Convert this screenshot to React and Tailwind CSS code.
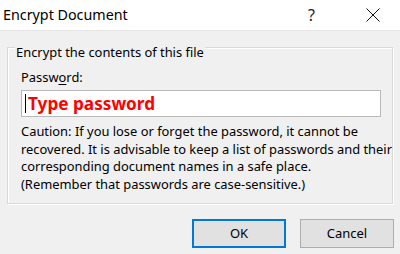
import React from 'react';

const font = { fontFamily: '"Noto Sans", "Open Sans", sans-serif' };

export default function App() {
  return (
    <div
      className="w-[400px] h-[254px] bg-[#f0f0f0] overflow-hidden flex flex-col text-black"
      style={font}
    >
      {/* title bar */}
      <div className="h-[31px] bg-white border-b border-[#e6e6e6] flex items-center shrink-0">
        <div className="pl-[3px] text-[14.3px] leading-none flex-1">Encrypt Document</div>
        <div className="w-[14px] text-[16px] leading-none text-[#222] mr-[44px]">?</div>
        <svg width="14" height="14" viewBox="0 0 14 14" className="mr-[20px]">
          <path d="M0.5 0.5 L13.5 13.5 M13.5 0.5 L0.5 13.5" stroke="#111" strokeWidth="1" fill="none" />
        </svg>
      </div>

      {/* group box */}
      <div className="mx-[7px] mt-[16px] h-[157px] border border-[#d9d9d9] shadow-[inset_1px_1px_0_#fff,1px_1px_0_#fff] shrink-0">
        <div className="-mt-[5px] ml-[7px] w-fit px-[1px] bg-[#f0f0f0] text-[12.9px] leading-[18px]">
          Encrypt the contents of this file
        </div>
        <div className="pl-[13px] pr-[11px]">
          <div className="text-[12.9px] leading-[18px] mt-[7px]">
            Passw<span className="underline underline-offset-2">o</span>rd:
          </div>
          <div className="mt-[4px] h-[27px] bg-white border border-[#b9b9b9] flex items-center pl-[3px]">
            <span className="w-[1px] h-[19px] bg-black mr-[2px]" />
            <span className="text-[red] font-bold text-[17.2px] leading-none">Type password</span>
          </div>
          <p className="mt-[6px] text-[12.9px] leading-[17.6px] whitespace-nowrap">
            Caution: If you lose or forget the password, it cannot be
            <br />
            recovered. It is advisable to keep a list of passwords and their
            <br />
            corresponding document names in a safe place.
            <br />
            (Remember that passwords are case-sensitive.)
          </p>
        </div>
      </div>

      {/* buttons */}
      <div className="flex justify-end gap-[14px] pr-[6px] mt-auto mb-[6px]">
        <button className="w-[94px] h-[29px] bg-[#e1e1e1] border-2 border-[#0078d7] text-[13px]">
          OK
        </button>
        <button className="w-[94px] h-[29px] bg-[#e1e1e1] border border-[#adadad] text-[13px]">
          Cancel
        </button>
      </div>
    </div>
  );
}
